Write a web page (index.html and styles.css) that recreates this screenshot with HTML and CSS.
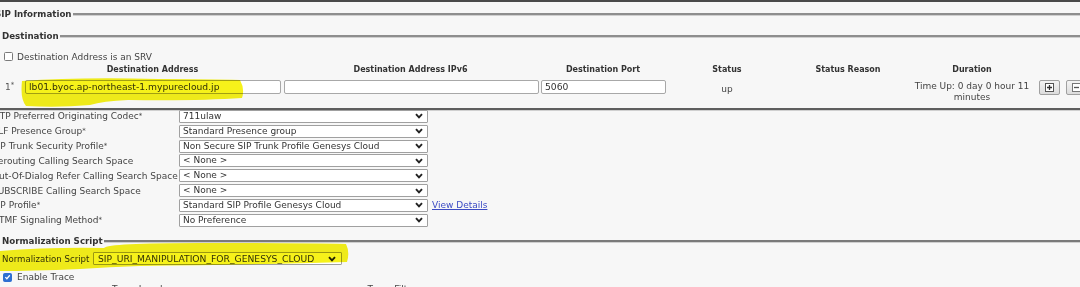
FILE: index.html
```html
<!DOCTYPE html>
<html>
<head>
<meta charset="utf-8">
<link rel="stylesheet" href="styles.css">
</head>
<body>
<div class="page">
  <div class="topbar"></div>
  <div class="legend legend-sip"><span class="lt">SIP Information</span><span class="lline"></span></div>
  <div class="legend legend-dest"><span class="lt">Destination</span><span class="lline"></span></div>
  <div class="srv"><span class="cb"></span><span>Destination Address is an SRV</span></div>
  <div class="dest">
    <div class="dh"></div>
    <div class="dh">Destination Address</div>
    <div class="dh">Destination Address IPv6</div>
    <div class="dh">Destination Port</div>
    <div class="dh">Status</div>
    <div class="dh">Status Reason</div>
    <div class="dh">Duration</div>
    <div class="dh"></div>

    <div class="dc num">1<sup>*</sup></div>
    <div class="dc"><div class="inp w1">lb01.byoc.ap-northeast-1.mypurecloud.jp</div></div>
    <div class="dc"><div class="inp w2"></div></div>
    <div class="dc"><div class="inp w3">5060</div></div>
    <div class="dc status">up</div>
    <div class="dc"></div>
    <div class="dc dur">Time Up: 0 day 0 hour 11<br>minutes</div>
    <div class="dc btns">
      <span class="btn"><svg width="9" height="9" viewBox="0 0 9 9"><rect x="0.5" y="0.5" width="8" height="8" fill="#fff" stroke="#555"/><path d="M4.5 2v5M2 4.5h5" stroke="#333" stroke-width="1.3"/></svg></span>
      <span class="btn"><svg width="9" height="9" viewBox="0 0 9 9"><rect x="0.5" y="0.5" width="8" height="8" fill="#fff" stroke="#777"/><path d="M2 4.5h5" stroke="#555" stroke-width="1.3"/></svg></span>
    </div>
  </div>
  <div class="rule"></div>
  <div class="fields">
    <div class="fl">MTP Preferred Originating Codec<sup>*</sup></div>
    <div class="fv"><div class="sel"><span>711ulaw</span><svg class="chev" width="8" height="6" viewBox="0 0 8 6"><path d="M1 1.2L4 4.4L7 1.2" fill="none" stroke="#222" stroke-width="1.9"/></svg></div></div>
    <div class="fl">BLF Presence Group<sup>*</sup></div>
    <div class="fv"><div class="sel"><span>Standard Presence group</span><svg class="chev" width="8" height="6" viewBox="0 0 8 6"><path d="M1 1.2L4 4.4L7 1.2" fill="none" stroke="#222" stroke-width="1.9"/></svg></div></div>
    <div class="fl">SIP Trunk Security Profile<sup>*</sup></div>
    <div class="fv"><div class="sel"><span>Non Secure SIP Trunk Profile Genesys Cloud</span><svg class="chev" width="8" height="6" viewBox="0 0 8 6"><path d="M1 1.2L4 4.4L7 1.2" fill="none" stroke="#222" stroke-width="1.9"/></svg></div></div>
    <div class="fl">Rerouting Calling Search Space</div>
    <div class="fv"><div class="sel"><span>&lt; None &gt;</span><svg class="chev" width="8" height="6" viewBox="0 0 8 6"><path d="M1 1.2L4 4.4L7 1.2" fill="none" stroke="#222" stroke-width="1.9"/></svg></div></div>
    <div class="fl">Out-Of-Dialog Refer Calling Search Space</div>
    <div class="fv"><div class="sel"><span>&lt; None &gt;</span><svg class="chev" width="8" height="6" viewBox="0 0 8 6"><path d="M1 1.2L4 4.4L7 1.2" fill="none" stroke="#222" stroke-width="1.9"/></svg></div></div>
    <div class="fl">SUBSCRIBE Calling Search Space</div>
    <div class="fv"><div class="sel"><span>&lt; None &gt;</span><svg class="chev" width="8" height="6" viewBox="0 0 8 6"><path d="M1 1.2L4 4.4L7 1.2" fill="none" stroke="#222" stroke-width="1.9"/></svg></div></div>
    <div class="fl">SIP Profile<sup>*</sup></div>
    <div class="fv"><div class="sel"><span>Standard SIP Profile Genesys Cloud</span><svg class="chev" width="8" height="6" viewBox="0 0 8 6"><path d="M1 1.2L4 4.4L7 1.2" fill="none" stroke="#222" stroke-width="1.9"/></svg></div><a class="link">View Details</a></div>
    <div class="fl">DTMF Signaling Method<sup>*</sup></div>
    <div class="fv"><div class="sel"><span>No Preference</span><svg class="chev" width="8" height="6" viewBox="0 0 8 6"><path d="M1 1.2L4 4.4L7 1.2" fill="none" stroke="#222" stroke-width="1.9"/></svg></div></div>
  </div>
  <div class="legend legend-norm"><span class="lt">Normalization Script</span><span class="lline"></span></div>
  <div class="norm">
    <span class="nl">Normalization Script</span>
    <div class="sel nsel"><span>SIP_URI_MANIPULATION_FOR_GENESYS_CLOUD</span><svg class="chev" width="8" height="6" viewBox="0 0 8 6"><path d="M1 1.2L4 4.4L7 1.2" fill="none" stroke="#222" stroke-width="1.9"/></svg></div>
  </div>
  <div class="trace"><span class="cb checked"><svg width="8" height="8" viewBox="0 0 8 8"><path d="M1.5 4.2L3.3 6L6.6 2" fill="none" stroke="#fff" stroke-width="1.4"/></svg></span><span>Enable Trace</span></div>
  <div class="cutrow"><span class="c1">Trace Level</span><span class="c2">Trace Filter</span></div>

  <svg class="hl hl1" width="240" height="40" viewBox="0 0 240 40"><path d="M4 4 Q60 0 140 2 Q190 2 222 3 Q227 12 224 21 Q180 24 110 23 Q85 24 72 28 Q40 31 8 29 Q2 22 4 4 Z" fill="#f6f21a"/></svg>
  <svg class="hl hl2" width="360" height="40" viewBox="0 0 360 40"><path d="M0 9 Q50 5 104 6 Q108 1 200 1 Q300 1 346 2 Q350 10 347 20 Q250 23 140 24 Q110 25 80 27 Q30 29 0 29 Z" fill="#f6f21a"/></svg>
</div>
</body>
</html>
```

FILE: styles.css
```css
html, body {
  margin: 0;
  padding: 0;
  background: #f7f7f7;
}
body {
  width: 1080px;
  height: 287px;
  overflow: hidden;
  font-family: "DejaVu Sans", Verdana, sans-serif;
  font-size: 9px;
  color: #444;
}
.page {
  position: relative;
  width: 1080px;
  height: 287px;
  overflow: hidden;
}
sup {
  font-size: 7px;
  line-height: 0;
  vertical-align: 3px;
}
.topbar {
  height: 2px;
  background: #4a4a4a;
}
.legend {
  display: flex;
  align-items: center;
  font-weight: bold;
  font-size: 8.7px;
  color: #333;
}
.legend .lt {
  white-space: nowrap;
  padding-right: 1px;
}
.legend .lline {
  flex: 1;
  height: 2px;
  background: #8e8e8e;
  border-bottom: 1px solid #cfcfcf;
}
.legend-sip {
  height: 24px;
  margin-left: -5px;
}
.legend-dest {
  height: 20px;
  margin-left: 2px;
}
.srv {
  height: 17px;
  margin-top: 2px;
  display: flex;
  align-items: center;
  gap: 4px;
  padding-left: 4px;
}
.cb {
  width: 7px;
  height: 7px;
  border: 1px solid #7a7a7a;
  border-radius: 1.5px;
  background: #fff;
  display: inline-flex;
  align-items: center;
  justify-content: center;
}
.cb.checked {
  background: #2e6fd2;
  border-color: #2e6fd2;
}
.dest {
  display: grid;
  grid-template-columns: 23px 259px 257px 128px 120px 122px 126px 50px;
  grid-template-rows: 10px 33px;
}
.dh {
  font-weight: bold;
  font-size: 8px;
  color: #333;
  text-align: center;
  line-height: 10px;
  white-space: nowrap;
}
.dc {
  padding-top: 5px;
}
.num {
  padding-top: 7px;
  padding-left: 5px;
  color: #555;
}
.inp {
  margin-left: 2px;
  height: 12px;
  border: 1px solid #a8a8a8;
  border-radius: 2px;
  background: #fff;
  line-height: 12px;
  padding-left: 3px;
  box-sizing: content-box;
  color: #333;
  font-size: 9.2px;
  white-space: nowrap;
  overflow: hidden;
}
.w1 { width: 251px; }
.w2 { width: 250px; }
.w3 { width: 120px; }
.status {
  text-align: center;
  padding-top: 9px;
}
.dur {
  text-align: center;
  line-height: 11px;
  padding-top: 6px;
  white-space: nowrap;
}
.btns {
  display: flex;
  gap: 6px;
  padding-left: 4px;
}
.btn {
  width: 19px;
  height: 13px;
  border: 1px solid #a0a0a0;
  border-radius: 2px;
  background: linear-gradient(#f4f4f4, #dcdcdc);
  display: inline-flex;
  align-items: center;
  justify-content: center;
  flex: none;
}
.rule {
  height: 2px;
  background: #5e5e5e;
  border-bottom: 1px solid #d0d0d0;
}
.fields {
  height: 121px;
  display: grid;
  grid-template-columns: 187px auto;
  grid-auto-rows: 14.85px;
  margin-left: -8px;
  margin-top: -2px;
}
.fl {
  display: flex;
  align-items: center;
  white-space: nowrap;
  color: #444;
}
.fv {
  display: flex;
  align-items: center;
  gap: 4px;
}
.sel {
  width: 240px;
  height: 11px;
  border: 1px solid #a0a0a0;
  border-radius: 1px;
  background: #fff;
  display: flex;
  align-items: center;
  justify-content: space-between;
  padding: 0 4px 0 3px;
  box-sizing: content-box;
  color: #333;
  white-space: nowrap;
  line-height: 11px;
}
.sel span {
  overflow: hidden;
}
.chev {
  flex: none;
}
.link {
  color: #3c4bc4;
  text-decoration: underline;
  white-space: nowrap;
}
.legend-norm {
  height: 22px;
  margin-left: 2px;
}
.legend-norm .lline {
  background: #7a7a7a;
}
.norm {
  height: 13px;
  display: flex;
  align-items: center;
  padding-left: 2px;
  gap: 3px;
}
.nl {
  white-space: nowrap;
  color: #333;
  font-size: 8.6px;
  width: 88px;
  flex: none;
}
.nsel {
  width: 238px;
  padding-left: 4px;
  padding-right: 5px;
  font-size: 9.2px;
}
.trace {
  margin-top: 4px;
  height: 16px;
  display: flex;
  align-items: center;
  gap: 5px;
  padding-left: 3px;
}
.cutrow {
  display: flex;
  height: 10px;
  line-height: 10px;
  margin-top: -1px;
}
.c1 { margin-left: 112px; }
.c2 { margin-left: 205px; }
.hl {
  position: absolute;
  mix-blend-mode: multiply;
  pointer-events: none;
}
.hl1 { left: 18px; top: 77px; }
.hl2 { left: 0px; top: 242px; }
```
